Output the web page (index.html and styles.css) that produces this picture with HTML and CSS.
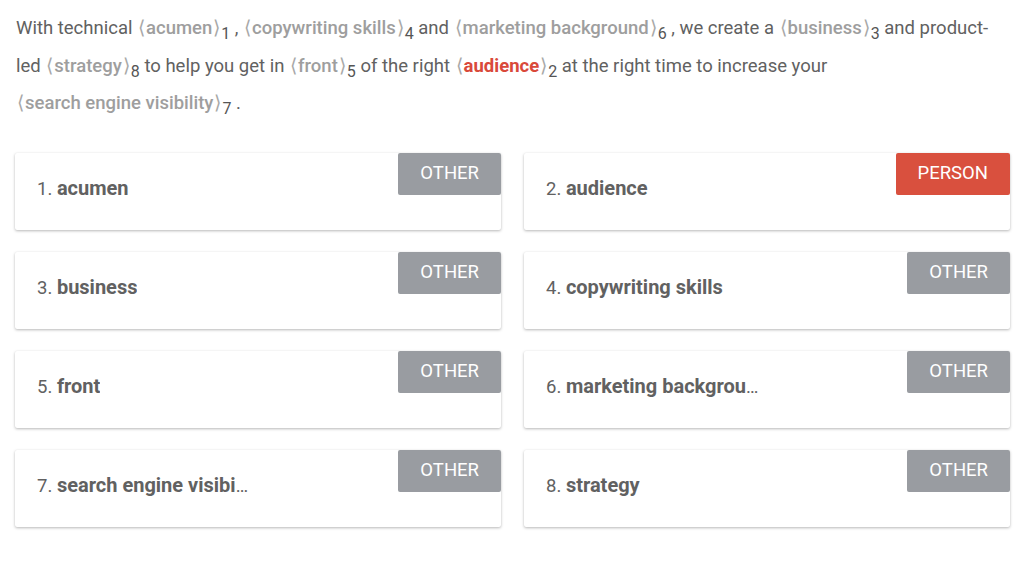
FILE: index.html
```html
<!DOCTYPE html>
<html lang="en">
<head>
    <meta charset="UTF-8">
    <meta name="viewport" content="width=device-width, initial-scale=1.0">
    <title>Entities</title>
    <link rel="stylesheet" href="styles.css">
</head>
<body>
    <div class="page">
        <p class="sentence">
            With technical <span class="ent"><i>⟨</i>acumen<i>⟩</i></span><sub>1</sub> , <span class="ent"><i>⟨</i>copywriting skills<i>⟩</i></span><sub>4</sub> and <span class="ent"><i>⟨</i>marketing background<i>⟩</i></span><sub>6</sub> , we create a <span class="ent"><i>⟨</i>business<i>⟩</i></span><sub>3</sub> and product-led <span class="ent"><i>⟨</i>strategy<i>⟩</i></span><sub>8</sub> to help you get in <span class="ent"><i>⟨</i>front<i>⟩</i></span><sub>5</sub> of the right <span class="ent person"><i>⟨</i>audience<i>⟩</i></span><sub>2</sub> at the right time to increase your <span class="ent"><i>⟨</i>search engine visibility<i>⟩</i></span><sub>7</sub> .
        </p>
        <div class="cards">
            <div class="card">
                <div class="label">1. <b>acumen</b></div>
                <span class="tag">OTHER</span>
            </div>
            <div class="card">
                <div class="label">2. <b>audience</b></div>
                <span class="tag tag-person">PERSON</span>
            </div>
            <div class="card">
                <div class="label">3. <b>business</b></div>
                <span class="tag">OTHER</span>
            </div>
            <div class="card">
                <div class="label">4. <b>copywriting skills</b></div>
                <span class="tag">OTHER</span>
            </div>
            <div class="card">
                <div class="label">5. <b>front</b></div>
                <span class="tag">OTHER</span>
            </div>
            <div class="card">
                <div class="label">6. <b>marketing background</b></div>
                <span class="tag">OTHER</span>
            </div>
            <div class="card">
                <div class="label">7. <b>search engine visibility</b></div>
                <span class="tag">OTHER</span>
            </div>
            <div class="card">
                <div class="label">8. <b>strategy</b></div>
                <span class="tag">OTHER</span>
            </div>
        </div>
    </div>
</body>
</html>
```
FILE: styles.css
```css
body {
    margin: 0;
    padding: 0;
    background-color: #fff;
    color: #616161;
    font-family: Roboto, 'Liberation Sans', sans-serif;
}
.page {
    width: 995px;
    padding: 10px 0 40px 15px;
}
.sentence {
    margin: 0 0 30px 1px;
    font-size: 18.5px;
    line-height: 37.5px;
}
.ent {
    color: #9e9e9e;
    font-weight: 500;
    white-space: nowrap;
}
.ent i {
    font-style: normal;
    font-weight: 400;
    margin: 0 1px;
    color: #a8a8a8;
}
.person {
    color: #d9493a;
    font-weight: 700;
}
sub {
    font-size: 16px;
    line-height: 0;
    vertical-align: -5px;
    color: #555;
}
.cards {
    display: grid;
    grid-template-columns: 1fr 1fr;
    column-gap: 23px;
    row-gap: 22px;
}
.card {
    height: 77px;
    display: flex;
    justify-content: space-between;
    align-items: flex-start;
    background: #fff;
    border-radius: 2px;
    box-shadow: 0 1px 3px rgba(0, 0, 0, 0.28), 0 0 1px rgba(0, 0, 0, 0.06);
}
.label {
    margin: 23px 0 0 22px;
    max-width: 216px;
    font-size: 18.5px;
    line-height: 24px;
    white-space: nowrap;
    overflow: hidden;
    text-overflow: ellipsis;
    color: #616161;
}
.label b {
    font-size: 20px;
    font-weight: 700;
}
.tag {
    height: 42px;
    padding: 0 22px;
    box-sizing: border-box;
    line-height: 40px;
    font-size: 18.5px;
    color: #fff;
    background-color: #999ca1;
    border-radius: 2px;
}
.tag-person {
    background-color: #d9503e;
    padding: 0 22px;
}
```
